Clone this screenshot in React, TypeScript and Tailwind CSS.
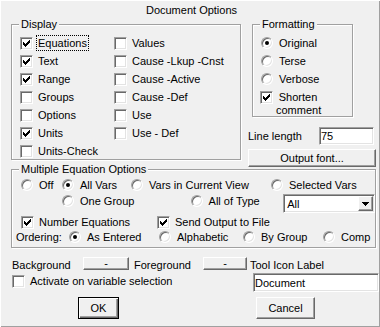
import type { ReactNode } from "react";

// classic win32 bevels
const sunken =
  "border border-t-[#a0a0a0] border-l-[#a0a0a0] border-r-white border-b-white shadow-[inset_1px_1px_0_#696969,inset_-1px_-1px_0_#e3e3e3]";
const raised =
  "border border-t-white border-l-white border-r-[#696969] border-b-[#696969] shadow-[inset_-1px_-1px_0_#a0a0a0]";

function CheckBox({ on = false }: { on?: boolean }) {
  return (
    <span className={`relative block h-[13px] w-[13px] shrink-0 bg-white ${sunken}`}>
      {on && (
        <svg
          width="7"
          height="7"
          viewBox="0 0 7 7"
          shapeRendering="crispEdges"
          className="absolute left-[2px] top-[2px]"
        >
          <path
            d="M0 2h1v3H0zM1 3h1v3H1zM2 4h1v3H2zM3 3h1v3H3zM4 2h1v3H4zM5 1h1v3H5zM6 0h1v3H6z"
            fill="#000"
          />
        </svg>
      )}
    </span>
  );
}

function Radio({ on = false }: { on?: boolean }) {
  return (
    <span
      className={`relative block h-[12px] w-[12px] shrink-0 rounded-full bg-white ${sunken}`}
    >
      {on && (
        <span className="absolute left-[3px] top-[3px] h-[4px] w-[4px] rounded-full bg-black" />
      )}
    </span>
  );
}

function Opt({
  label,
  on,
  radio,
  focus,
  className = "",
}: {
  label: ReactNode;
  on?: boolean;
  radio?: boolean;
  focus?: boolean;
  className?: string;
}) {
  return (
    <div className={`flex items-start ${className}`}>
      {radio ? <Radio on={on} /> : <CheckBox on={on} />}
      {focus ? (
        <span className="ml-[3px] -mt-[2px] whitespace-nowrap border border-dotted border-black px-[1px] pt-[1px]">
          {label}
        </span>
      ) : (
        <span className={`${radio ? "ml-[6px]" : "ml-[5px]"} whitespace-nowrap`}>{label}</span>
      )}
    </div>
  );
}

function Group({
  label,
  className = "",
  children,
}: {
  label: string;
  className?: string;
  children: ReactNode;
}) {
  return (
    <div
      className={`relative shrink-0 border border-[#a0a0a0] shadow-[1px_1px_0_#fff,inset_1px_1px_0_#fff] ${className}`}
    >
      <span className="absolute -top-[7px] left-[7px] bg-[#f0f0f0] px-[2px]">{label}</span>
      {children}
    </div>
  );
}

function Btn({
  children,
  className = "",
  isDefault,
}: {
  children: ReactNode;
  className?: string;
  isDefault?: boolean;
}) {
  const look = isDefault
    ? "border border-black shadow-[inset_1px_1px_0_#fff,inset_-1px_-1px_0_#696969,inset_-2px_-2px_0_#a0a0a0]"
    : raised;
  return (
    <button
      type="button"
      className={`flex shrink-0 items-center justify-center bg-[#f0f0f0] ${look} ${className}`}
    >
      {children}
    </button>
  );
}

const displayLeft = [
  { label: "Equations", on: true, focus: true },
  { label: "Text", on: true },
  { label: "Range", on: true },
  { label: "Groups" },
  { label: "Options" },
  { label: "Units", on: true },
  { label: "Units-Check" },
];

const displayRight = [
  { label: "Values" },
  { label: "Cause -Lkup -Cnst" },
  { label: "Cause -Active" },
  { label: "Cause -Def" },
  { label: "Use" },
  { label: "Use - Def" },
];

export default function App() {
  return (
    <div className="h-[327px] w-[380px] overflow-hidden bg-[#f0f0f0] font-['Liberation_Sans',Arial,sans-serif] text-[11px] leading-[13px] text-black shadow-[inset_1px_1px_0_#fff,inset_-1px_-1px_0_#a0a0a0]">
      <div className="h-[24px] pl-[3px] pt-[4px] text-center">Document Options</div>

      <div className="flex h-[145px] pl-[11px]">
        <Group label="Display" className="h-[136px] w-[230px]">
          <div className="flex pl-[8px] pt-[10px]">
            <div className="w-[94px]">
              {displayLeft.map((o) => (
                <Opt key={o.label} className="h-[18px] pt-[2px]" {...o} />
              ))}
            </div>
            <div>
              {displayRight.map((o) => (
                <Opt key={o.label} className="h-[18px] pt-[2px]" {...o} />
              ))}
            </div>
          </div>
        </Group>

        <div className="ml-[7px] flex w-[128px] flex-col">
          <Group label="Formatting" className="ml-[4px] h-[93px] w-[101px]">
            <div className="pl-[8px] pt-[10px]">
              <Opt radio on label="Original" className="h-[18px] pt-[2px]" />
              <Opt radio label="Terse" className="h-[18px] pt-[2px]" />
              <Opt radio label="Verbose" className="h-[18px] pt-[2px]" />
              <div className="-ml-[1px] flex items-start pt-[2px]">
                <CheckBox on />
                <span className="ml-[3px] w-[44px] text-center">Shorten comment</span>
              </div>
            </div>
          </Group>
          <div className="mt-[10px] flex h-[18px] items-center">
            <span className="w-[71px]">Line length</span>
            <input
              readOnly
              value="75"
              className={`h-[18px] w-[55px] bg-white px-[1px] outline-none ${sunken}`}
            />
          </div>
          <Btn className="mt-[4px] h-[18px] w-[128px]">Output font...</Btn>
        </div>
      </div>

      <Group label="Multiple Equation Options" className="ml-[11px] h-[79px] w-[365px]">
        <div className="pl-[9px] pt-[9px]">
          <div className="flex h-[16px]">
            <Opt radio label="Off" className="w-[41px]" />
            <Opt radio on label="All Vars" className="w-[69px]" />
            <Opt radio label="Vars in Current View" className="w-[140px]" />
            <Opt radio label="Selected Vars" />
          </div>
          <div className="flex h-[21px] pl-[41px]">
            <Opt radio label="One Group" className="w-[129px]" />
            <Opt radio label="All of Type" className="w-[93px]" />
            <div className={`-mt-[1px] flex h-[19px] w-[92px] bg-white p-[1px] ${sunken}`}>
              <span className="flex-1 pl-[2px] leading-[17px]">All</span>
              <span className={`flex h-full w-[15px] items-center justify-center bg-[#f0f0f0] ${raised}`}>
                <svg width="7" height="4" viewBox="0 0 7 4" shapeRendering="crispEdges">
                  <path d="M0 0h7v1H0zM1 1h5v1H1zM2 2h3v1H2zM3 3h1v1H3z" fill="#000" />
                </svg>
              </span>
            </div>
          </div>
          <div className="flex h-[15px]">
            <Opt on label="Number Equations" className="w-[136px]" />
            <Opt on label="Send Output to File" />
          </div>
          <div className="-ml-[5px] flex h-[14px]">
            <span className="w-[53px]">Ordering:</span>
            <Opt radio on label="As Entered" className="w-[90px]" />
            <Opt radio label="Alphabetic" className="w-[84px]" />
            <Opt radio label="By Group" className="w-[80px]" />
            <Opt radio label="Comp" />
          </div>
        </div>
      </Group>

      <div className="mt-[9px] flex h-[13px] pl-[12px]">
        <span className="mt-[2px] w-[71px]">Background</span>
        <Btn className="h-[13px] w-[46px] leading-[11px]">-</Btn>
        <span className="ml-[5px] mt-[2px] w-[69px]">Foreground</span>
        <Btn className="h-[13px] w-[44px] leading-[11px]">-</Btn>
        <span className="ml-[3px] mt-[2px]">Tool Icon Label</span>
      </div>

      <div className="mt-[3px] flex h-[19px] pl-[12px]">
        <Opt label="Activate on variable selection" className="mt-[2px]" />
        <input
          readOnly
          value="Document"
          className={`ml-auto mr-[1px] h-[19px] w-[126px] bg-white px-[1px] outline-none ${sunken}`}
        />
      </div>

      <div className="mt-[5px] flex pl-[78px]">
        <Btn isDefault className="h-[22px] w-[41px]">
          OK
        </Btn>
        <Btn className="ml-[137px] h-[22px] w-[59px]">Cancel</Btn>
      </div>
    </div>
  );
}
